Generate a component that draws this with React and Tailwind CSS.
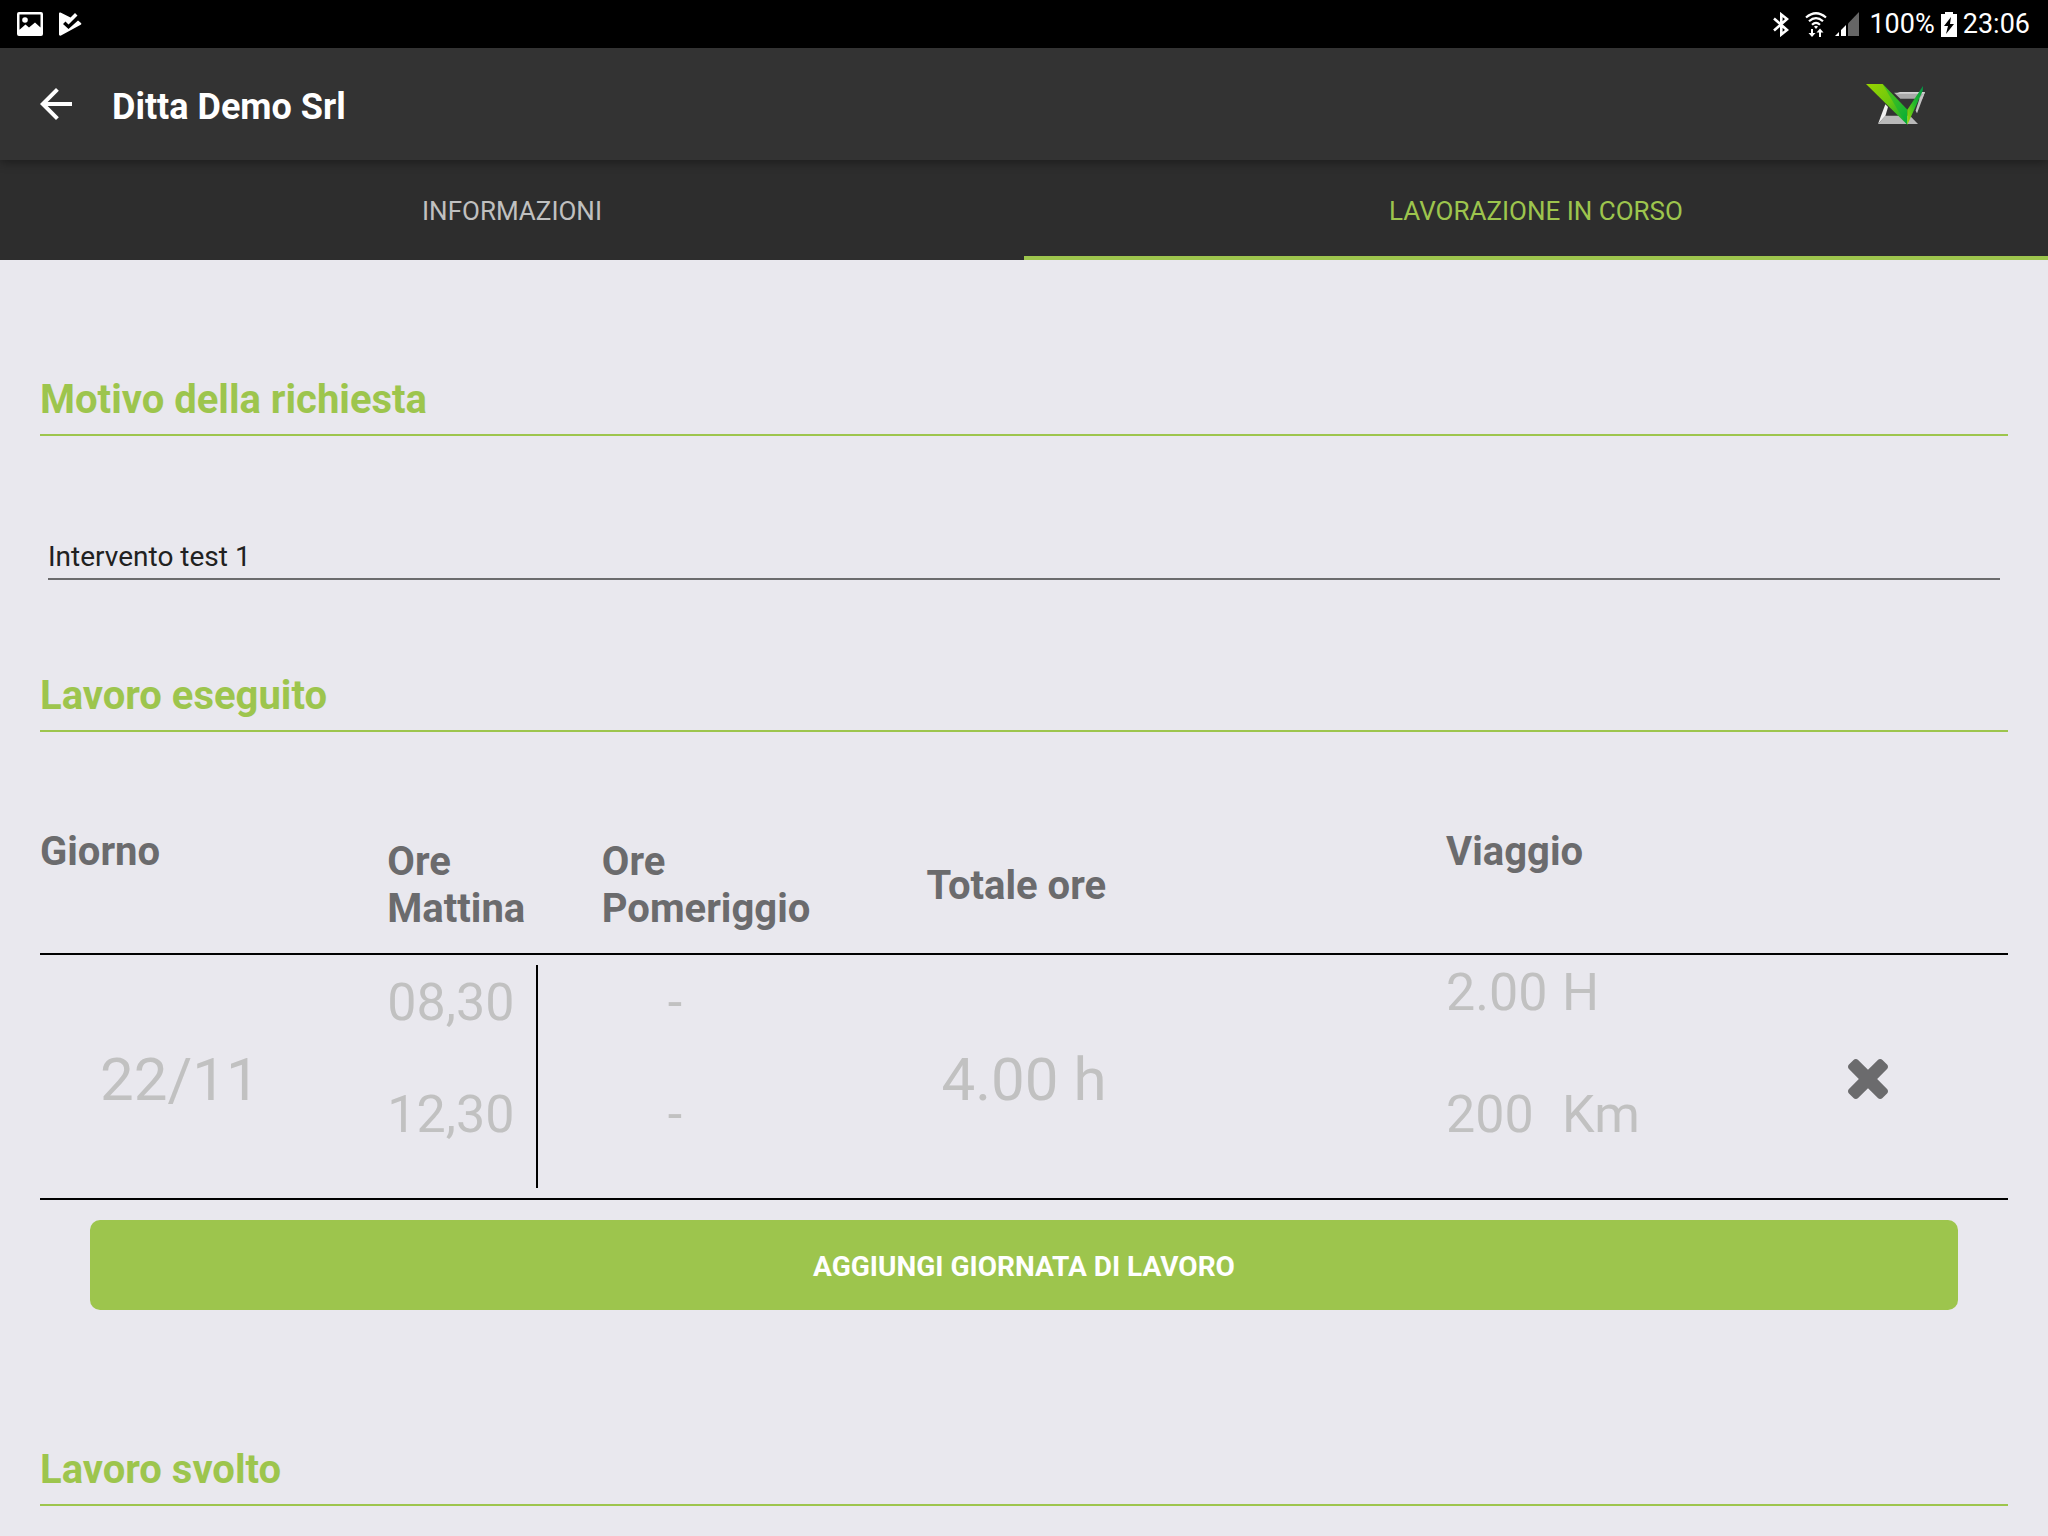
import { useState } from 'react';
import { MdArrowBack } from 'react-icons/md';

const tabs = ['INFORMAZIONI', 'LAVORAZIONE IN CORSO'];

const initialDays = [
  {
    id: 1,
    day: '22/11',
    morning: ['08,30', '12,30'],
    afternoon: ['-', '-'],
    total: '4.00 h',
    travelHours: '2.00',
    travelKm: '200',
  },
];

function PictureIcon() {
  return (
    <svg viewBox="0 0 26 24" className="w-[26px] h-6" aria-hidden="true">
      <path
        fill="currentColor"
        fillRule="evenodd"
        d="M2 0h22a2 2 0 0 1 2 2v20a2 2 0 0 1-2 2H2a2 2 0 0 1-2-2V2a2 2 0 0 1 2-2zm.5 2.5v15.3l6-5.3 3.5 3 6-5 5.5 5v-13z"
      />
      <circle cx="8" cy="8" r="2.8" fill="currentColor" />
    </svg>
  );
}

function PlayCheckIcon() {
  return (
    <svg viewBox="0 0 23 24" className="w-[23px] h-6" aria-hidden="true">
      <path
        fill="currentColor"
        d="M0 1.5Q0 0 1.5.5L11.5 5.5 16 1l2.5 2.5-9 9-3-3L4 12l5.5 5L19 8.5l3 2.5q1 1-.3 1.8L2 23.5Q0 24 0 22.5z"
      />
    </svg>
  );
}

function BluetoothIcon() {
  return (
    <svg viewBox="0 0 16 25" className="w-4 h-[25px]" fill="none" stroke="currentColor" strokeWidth="2.6" aria-hidden="true">
      <path d="M1 6.500l13 11.500-5.700 4.500v-20L14 7 1 18.500" />
    </svg>
  );
}

function WifiTransferIcon() {
  return (
    <svg viewBox="0 0 22 25" className="w-[22px] h-[25px]" aria-hidden="true">
      <g fill="none" stroke="currentColor" strokeWidth="2.2">
        <path d="M1 5.5Q11-3 21 5.5" />
        <path d="M4 9.3Q11 3 18 9.3" />
        <path d="M7 12.8Q11 9 15 12.8" />
      </g>
      <path fill="currentColor" d="M9 14.5q2-1.5 4 0L11 17z" />
      <path fill="currentColor" d="M6 17h2v4h2.5L7 25l-3.500-4H6zM14 25v-4.500h-2.500L15 16.500l3.500 4H16V25z" />
    </svg>
  );
}

function SignalIcon() {
  return (
    <svg viewBox="0 0 24 24" className="size-6" aria-hidden="true">
      <path fill="#666666" d="M13 11.5 24 0v24H13z" />
      <path fill="currentColor" d="M0 24l4-4v4zM6 18l5-5v11H6z" />
    </svg>
  );
}

function BatteryIcon() {
  return (
    <svg viewBox="0 0 16 25" className="w-4 h-[25px]" aria-hidden="true">
      <path fill="currentColor" d="M4 0h8v2h4v23H0V2h4z" />
      <path fill="#000000" d="M10 5 3 14h4l-2 8 8-10H9z" />
    </svg>
  );
}

function AppLogo() {
  return (
    <svg viewBox="78 69 180 123" className="w-[60px] h-[41px]" role="img" aria-label="Logo">
      <defs>
        <linearGradient id="tick" x1="0" y1="0" x2="1" y2="1">
          <stop offset="0" stopColor="#9ad400" />
          <stop offset="0.5" stopColor="#6cc80e" />
          <stop offset="1" stopColor="#00a63a" />
        </linearGradient>
        <linearGradient id="tickRight" x1="1" y1="0" x2="0" y2="1">
          <stop offset="0" stopColor="#009a45" />
          <stop offset="0.5" stopColor="#22b82a" />
          <stop offset="1" stopColor="#a4dc00" />
        </linearGradient>
      </defs>
      <path fill="#a9a9a9" d="M162 95l93-2-8 20h-66z" />
      <path fill="#d2d2d2" d="M180 93h75l-3 5h-86z" />
      <path fill="#c4c4c4" d="M255 93l-24 64-4-8 12-38z" />
      <path fill="#f0f0f0" d="M136 130l8 8-8 27-22 24z" />
      <path fill="#b9b9b9" d="M114 189l22-25h74l24 25z" />
      <path fill="url(#tick)" d="M78 69h50l74 77v45z" />
      <path fill="#00b23b" d="M128 69l74 77v45l-30-46z" opacity="0.45" />
      <path fill="url(#tickRight)" d="M202 146l47-71-1 15-46 101z" />
    </svg>
  );
}

function RemoveIcon() {
  return (
    <svg viewBox="302 366 1188 1188" className="size-10" fill="currentColor" aria-hidden="true">
      <path d="M1490 1322q0 40-28 68l-136 136q-28 28-68 28t-68-28l-294-294-294 294q-28 28-68 28t-68-28l-136-136q-28-28-28-68t28-68l294-294-294-294q-28-28-28-68t28-68l136-136q28-28 68-28t68 28l294 294 294-294q28-28 68-28t68 28l136 136q28 28 28 68t-28 68l-294 294 294 294q28 28 28 68z" />
    </svg>
  );
}

function StatusBar() {
  return (
    <div className="flex h-12 items-center justify-between bg-black pl-[17px] pr-[18px] text-white">
      <div className="flex items-center gap-4">
        <PictureIcon />
        <PlayCheckIcon />
      </div>
      <div className="flex items-center text-[27px] leading-8">
        <BluetoothIcon />
        <span className="ml-4">
          <WifiTransferIcon />
        </span>
        <span className="ml-2">
          <SignalIcon />
        </span>
        <span className="ml-2.5 mr-1.5">100%</span>
        <BatteryIcon />
        <span className="ml-1.5">23:06</span>
      </div>
    </div>
  );
}

function SectionTitle({ children }) {
  return (
    <h2 className="border-b-2 border-[#9dc54d] pb-[11px] text-[40px] leading-[47px] font-bold text-[#9dc54d]">
      {children}
    </h2>
  );
}

export default function App() {
  const [activeTab, setActiveTab] = useState(1);
  const [reason, setReason] = useState('Intervento test 1');
  const [days, setDays] = useState(initialDays);

  const handleRemove = (id) => {
    setDays(days.filter((d) => d.id !== id));
  };

  const handleAdd = () => {
    setDays([...days, { ...initialDays[0], id: Date.now() }]);
  };

  return (
    <div className="min-h-screen bg-[#e9e8ee] font-[Roboto,sans-serif]">
      <StatusBar />

      {/* App bar */}
      <header className="relative flex h-28 items-center bg-[#333333] pl-8 pr-[122px] text-white shadow-[0_2px_10px_rgba(0,0,0,0.4)]">
        <button type="button" aria-label="Indietro">
          <MdArrowBack className="size-12" />
        </button>
        <h1 className="ml-8 pt-1.5 text-[36px] leading-[42px] font-bold">Ditta Demo Srl</h1>
        <div className="ml-auto">
          <AppLogo />
        </div>
      </header>

      {/* Tabs */}
      <nav className="flex h-[100px] bg-[#2d2d2d]" role="tablist">
        {tabs.map((tab, i) => (
          <button
            key={tab}
            type="button"
            role="tab"
            aria-selected={activeTab === i}
            onClick={() => setActiveTab(i)}
            className={`flex-1 border-b-4 pt-1.5 text-[26px] leading-8 ${
              activeTab === i ? 'border-[#9dc54d] text-[#9dc54d]' : 'border-transparent text-[#c0c0c0]'
            }`}
          >
            {tab}
          </button>
        ))}
      </nav>

      <main className="overflow-hidden px-10 pt-[116px]">
        <SectionTitle>Motivo della richiesta</SectionTitle>
        <div className="mt-24 px-2">
          <input
            type="text"
            aria-label="Motivo della richiesta"
            value={reason}
            onChange={(e) => setReason(e.target.value)}
            className="block h-12 w-full border-b-2 border-[#6b6b6d] pt-0.5 text-[28px] leading-8 text-[#212121] outline-none"
          />
        </div>

        <div className="mt-[92px]">
          <SectionTitle>Lavoro eseguito</SectionTitle>
        </div>

        <table className="mt-[86px] w-full table-fixed border-separate border-spacing-0 text-left text-[#c1c1c1]">
          <colgroup>
            <col className="w-[17.65%]" />
            <col className="w-[10.9%]" />
            <col className="w-[16.5%]" />
            <col className="w-[26.4%]" />
            <col className="w-[14.3%]" />
            <col className="w-[14.25%]" />
          </colgroup>
          <thead>
            <tr className="text-[40px] leading-[47px] text-[#6b6b6d]">
              <th scope="col" className="border-b-2 border-black pt-2.5 align-top">Giorno</th>
              <th scope="col" className="border-b-2 border-black pt-5 pb-[21px] align-top">Ore<br />Mattina</th>
              <th scope="col" className="border-b-2 border-black pt-5 pb-[21px] align-top">Ore<br />Pomeriggio</th>
              <th scope="col" className="border-b-2 border-black align-middle">Totale ore</th>
              <th scope="col" className="border-b-2 border-black pt-2.5 align-top">Viaggio</th>
              <td className="border-b-2 border-black"></td>
            </tr>
          </thead>
          <tbody>
            {days.map((d) => (
              <tr key={d.id} className="text-[52px] leading-[61px]">
                <td className="border-b-2 border-black pt-1.5 pl-[60px] align-middle text-[60px] leading-[70px]">{d.day}</td>
                <td className="border-b-2 border-black py-2.5 align-top">
                  <div className="flex h-[223px] w-[151px] flex-col gap-[51px] border-r-2 border-black pt-[7px]">
                    {d.morning.map((hour) => (
                      <span key={hour}>{hour}</span>
                    ))}
                  </div>
                </td>
                <td className="border-b-2 border-black py-2.5 align-top">
                  <div className="flex flex-col gap-[51px] pt-[7px] pl-[66px]">
                    {d.afternoon.map((hour, i) => (
                      <span key={i}>{hour}</span>
                    ))}
                  </div>
                </td>
                <td className="border-b-2 border-black pt-1.5 pl-[15px] align-middle text-[60px] leading-[70px]">{d.total}</td>
                <td className="border-b-2 border-black pt-[7px] align-top">
                  <div className="grid grid-cols-[116px_1fr] gap-y-[61px]">
                    <span>{d.travelHours}</span>
                    <span>H</span>
                    <span>{d.travelKm}</span>
                    <span>Km</span>
                  </div>
                </td>
                <td className="border-b-2 border-black pt-1 align-middle">
                  <button
                    type="button"
                    aria-label="Elimina giornata"
                    onClick={() => handleRemove(d.id)}
                    className="mx-auto block text-[#6b6b6d]"
                  >
                    <RemoveIcon />
                  </button>
                </td>
              </tr>
            ))}
          </tbody>
        </table>

        <div className="mt-5 px-[50px]">
          <button
            type="button"
            onClick={handleAdd}
            className="h-[90px] w-full rounded-[10px] bg-[#9dc54d] pt-1 text-[28px] leading-8 font-bold text-white"
          >
            AGGIUNGI GIORNATA DI LAVORO
          </button>
        </div>

        <div className="mt-[136px] pb-[30px]">
          <SectionTitle>Lavoro svolto</SectionTitle>
        </div>
      </main>
    </div>
  );
}
